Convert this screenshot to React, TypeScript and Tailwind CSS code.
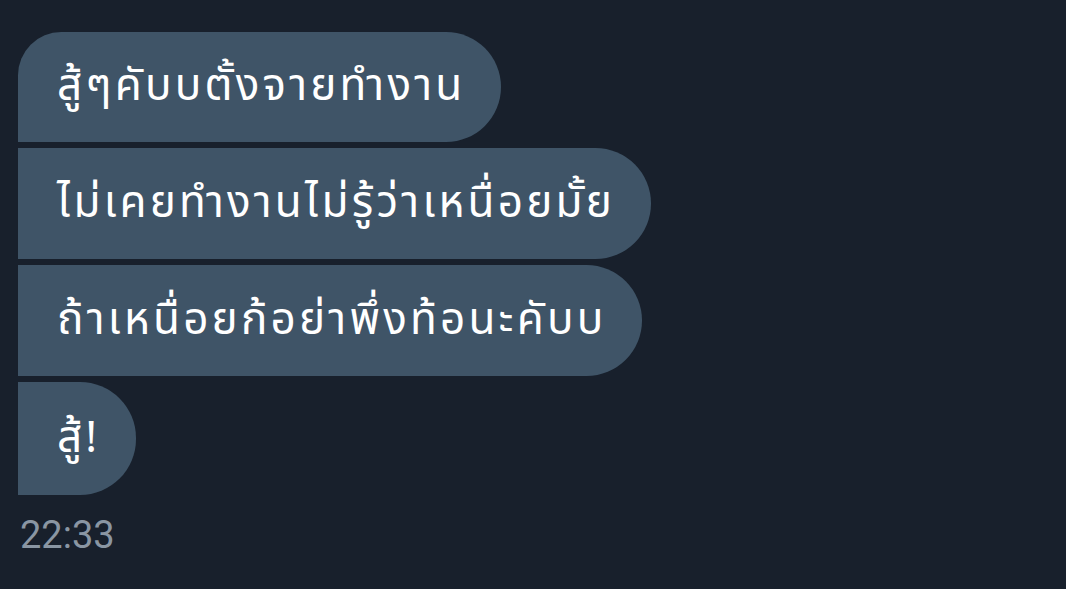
import React from 'react';

const MESSAGES = [
  { text: 'สู้ๆคับบตั้งจายทำงาน', shape: 'rounded-tl-[44px] h-[110px]' },
  { text: 'ไม่เคยทำงานไม่รู้ว่าเหนื่อยมั้ย', shape: 'h-[111px]' },
  { text: 'ถ้าเหนื่อยก้อย่าพึ่งท้อนะคับบ', shape: 'h-[111px]' },
  { text: 'สู้!', shape: 'h-[113px]' },
];

const App: React.FC = () => {
  return (
    <div className="w-[1066px] h-[589px] bg-[#18202c] pt-[32px] pl-[18px] overflow-hidden">
      <div className="flex flex-col items-start gap-[6px]">
        {MESSAGES.map((m, i) => (
          <div
            key={i}
            className={`flex items-center pl-[39px] pr-[36px] bg-[#3f5467] text-white text-[44px] tracking-[3.2px] rounded-r-[56px] ${m.shape}`}
            style={{ fontFamily: '"Noto Sans Thai", "Noto Sans", sans-serif' }}
          >
            {m.text}
          </div>
        ))}
      </div>
      <div className="mt-[21px] pl-[2px] text-[38px] leading-none text-[#8a96a3] font-['Roboto',sans-serif]">
        22:33
      </div>
    </div>
  );
};

export default App;
